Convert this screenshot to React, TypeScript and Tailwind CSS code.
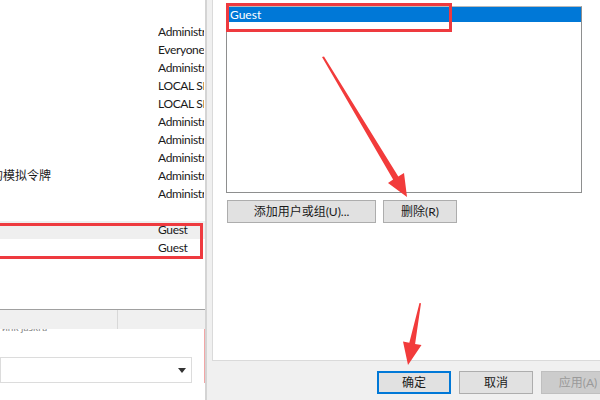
import React from "react";

const FONT = { fontFamily: 'Lato, "Noto Sans CJK SC", sans-serif' };

const rightCol = [
  "Administrators",
  "Everyone, Administrators",
  "Administrators",
  "LOCAL SERVICE",
  "LOCAL SERVICE",
  "Administrators",
  "Administrators",
  "Administrators",
  "Administrators",
  "Administrators",
];

function Row({ left, right, hl }: { left?: string; right?: string; hl?: boolean }) {
  return (
    <div className={`h-[18px] flex items-center text-[12px] text-[#1a1a1a] ${hl ? "bg-[#efefef]" : ""}`}>
      <div className="w-[158px] overflow-hidden whitespace-nowrap">
        <div className="-ml-[9px]">{left}</div>
      </div>
      <div className="w-[46px] overflow-hidden whitespace-nowrap tracking-[-0.35px]">{right}</div>
    </div>
  );
}

function WinButton({ children, w, primary, disabled }: { children: React.ReactNode; w: string; primary?: boolean; disabled?: boolean }) {
  const base = "h-[23px] flex items-center justify-center text-[12px] shrink-0";
  const look = primary
    ? "bg-[#e1e1e1] border-2 border-[#0078d7] text-[#1a1a1a]"
    : disabled
    ? "bg-[#cccccc] border border-[#bfbfbf] text-[#9a9a9a]"
    : "bg-[#e1e1e1] border border-[#adadad] text-[#1a1a1a]";
  return <div className={`${base} ${look} ${w}`}>{children}</div>;
}

export default function App() {
  return (
    <div className="relative w-[600px] h-[400px] overflow-hidden flex bg-white" style={FONT}>
      {/* Left window (behind) */}
      <div className="relative w-[205px] h-full bg-white flex flex-col shrink-0">
        <div className="h-[23px]" />
        {rightCol.map((r, i) => (
          <Row key={i} left={i === 8 ? "的模拟令牌" : undefined} right={r} />
        ))}
        <Row />
        <Row right="Guest" hl />
        <Row right="Guest" />
        <div className="h-[52px]" />
        <div className="h-[20px] flex bg-[#f0f0f0] border-t border-[#a0a0a0]">
          <div className="w-[118px] border-r border-[#d8d8d8]" />
          <div className="flex-1" />
        </div>
        <div className="h-[54px] flex flex-col border-r border-[#f2a6a6]">
          <div className="h-[5px] overflow-hidden text-[10px] leading-[12px] text-[#888]">
            <div className="-mt-[8px] pl-[2px]">ᴎнк јазкга</div>
          </div>
          <div className="h-[23px]" />
          <div className="w-[192px] h-[26px] border border-[#dcdcdc] bg-white flex items-center justify-end pr-[5px]">
            <svg width="8" height="5" viewBox="0 0 8 5"><path d="M0 0 H8 L4 5 Z" fill="#333" /></svg>
          </div>
        </div>
        <div className="flex-1" />
      </div>

      {/* Right dialog */}
      <div className="flex-1 flex flex-col bg-[#f0f0f0] border-l-2 border-[#d4d4d4] pl-[5px]">
        <div className="h-[361px] bg-white border-l border-b border-[#dadada] shrink-0 pl-[13px] pt-[6px] flex flex-col">
          <div className="w-[356px] h-[187px] border border-[#8e8f8f] border-t-[#b9b9b9] bg-white flex flex-col">
            <div className="h-[15px] bg-[#0078d7] text-white text-[12px] leading-[15px] pl-[3px]">Guest</div>
          </div>
          <div className="flex gap-[7px] mt-[7px] pl-[1px]">
            <WinButton w="w-[149px]">添加用户或组(U)...</WinButton>
            <WinButton w="w-[74px]">删除(R)</WinButton>
          </div>
        </div>
        <div className="flex gap-[8px] mt-[10px] pl-[165px]">
          <WinButton w="w-[74px]" primary>确定</WinButton>
          <WinButton w="w-[74px]">取消</WinButton>
          <WinButton w="w-[74px]" disabled>应用(A)</WinButton>
        </div>
      </div>

      {/* Annotations */}
      <div className="absolute left-[-4px] top-[223px] w-[207px] h-[36px] border-[3px] border-[#ee3a3f] pointer-events-none" />
      <div className="absolute left-[226px] top-[3px] w-[226px] h-[29px] border-[3px] border-[#ee3a3f] pointer-events-none" />
      <svg className="absolute left-0 top-0 pointer-events-none" width="600" height="400" viewBox="0 0 600 400">
        <polygon
          points="322,57 324,56.5 398.3,176.6 404,173 407,197 388,183 393.1,179.6"
          fill="#f23b3b"
        />
        <polygon
          points="419.5,303 421,303.3 415.1,344 421.5,345 408,365 403,341.5 409.3,342.8"
          fill="#f23b3b"
        />
      </svg>
    </div>
  );
}
